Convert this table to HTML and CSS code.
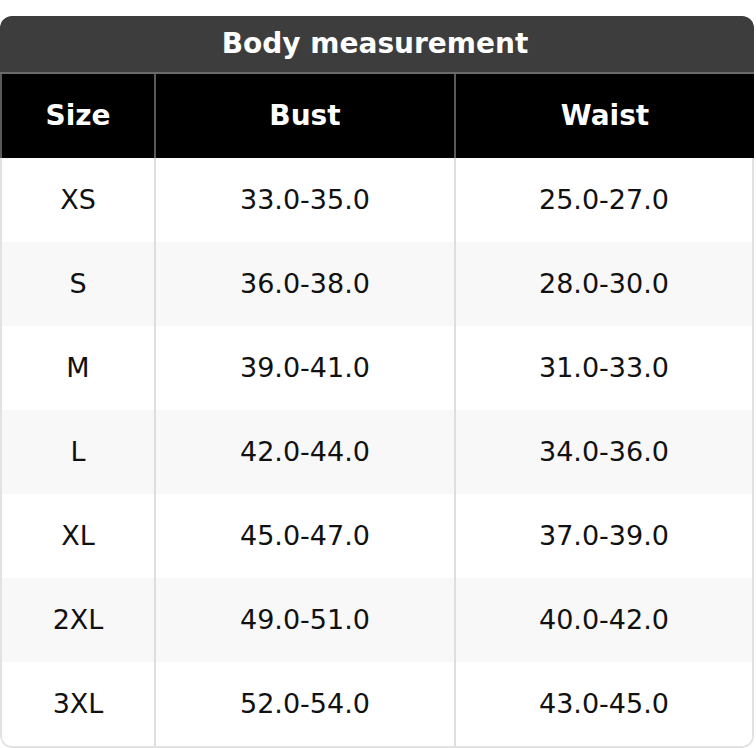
FILE: index.html
```html
<!DOCTYPE html>
<html>
<head>
<meta charset="utf-8">
<link rel="stylesheet" href="styles.css">
</head>
<body>
<div class="chart">
  <div class="title">Body measurement</div>
  <div class="head">
    <div class="hcell c1">Size</div>
    <div class="hcell c2">Bust</div>
    <div class="hcell c3">Waist</div>
  </div>
  <div class="body">
    <div class="row"><div class="cell c1">XS</div><div class="cell c2">33.0-35.0</div><div class="cell c3">25.0-27.0</div></div>
    <div class="row alt"><div class="cell c1">S</div><div class="cell c2">36.0-38.0</div><div class="cell c3">28.0-30.0</div></div>
    <div class="row"><div class="cell c1">M</div><div class="cell c2">39.0-41.0</div><div class="cell c3">31.0-33.0</div></div>
    <div class="row alt"><div class="cell c1">L</div><div class="cell c2">42.0-44.0</div><div class="cell c3">34.0-36.0</div></div>
    <div class="row"><div class="cell c1">XL</div><div class="cell c2">45.0-47.0</div><div class="cell c3">37.0-39.0</div></div>
    <div class="row alt"><div class="cell c1">2XL</div><div class="cell c2">49.0-51.0</div><div class="cell c3">40.0-42.0</div></div>
    <div class="row"><div class="cell c1">3XL</div><div class="cell c2">52.0-54.0</div><div class="cell c3">43.0-45.0</div></div>
  </div>
</div>
</body>
</html>
```
FILE: styles.css
```css
* { box-sizing: border-box; }
html, body { margin: 0; padding: 0; background: #fff; }
body { font-family: "DejaVu Sans", "Liberation Sans", sans-serif; }
.chart {
  width: 754px;
  margin-top: 16px;
  border-radius: 12px;
  overflow: hidden;
}
.title {
  height: 58px;
  background: #3d3d3d;
  border-bottom: 2px solid #6a6a6a;
  color: #fff;
  font-weight: bold;
  font-size: 28px;
  display: flex;
  align-items: center;
  justify-content: center;
  padding: 0 4px 2px 0;
}
.head {
  display: grid;
  grid-template-columns: 156px 300px 298px;
  height: 84px;
  background: #000;
}
.hcell {
  display: flex;
  align-items: center;
  justify-content: center;
  color: #fff;
  font-weight: bold;
  font-size: 28px;
  padding-bottom: 2px;
  border-right: 2px solid #5a5a5a;
}
.hcell.c1 { border-left: 2px solid #5a5a5a; }
.hcell.c3 { border-right: none; }
.body {
  border: 2px solid #e2e2e2;
  border-top: none;
  border-radius: 0 0 12px 12px;
  overflow: hidden;
}
.row {
  display: grid;
  grid-template-columns: 154px 300px 296px;
  height: 84px;
  background: #fff;
}
.row.alt { background: #f8f8f8; }
.cell {
  display: flex;
  align-items: center;
  justify-content: center;
  color: #111;
  font-size: 27px;
  padding-bottom: 2px;
  border-right: 2px solid #dedede;
}
.cell.c3 { border-right: none; }
```
